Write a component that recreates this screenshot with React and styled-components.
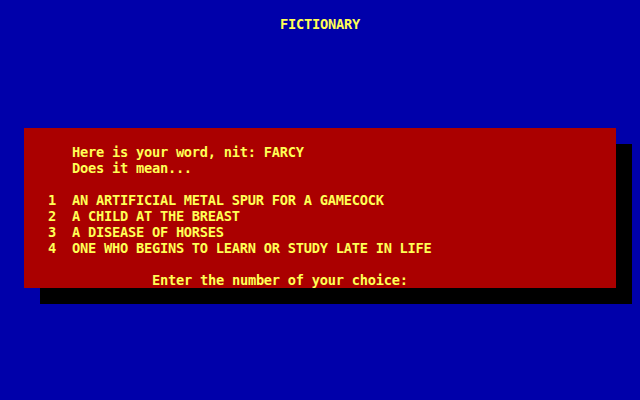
import React from "react";
import styled, { createGlobalStyle } from "styled-components";

const Global = createGlobalStyle`
  html, body { margin: 0; padding: 0; background: #0000aa; }
  body { width: 640px; height: 400px; overflow: hidden; }
`;

const Screen = styled.div`
  width: 640px;
  height: 400px;
  background: #0000aa;
  color: #ffff55;
  font-family: "DejaVu Sans Mono", "Liberation Mono", monospace;
  font-weight: bold;
  font-size: 13.7px;
  letter-spacing: -0.25px;
  line-height: 16px;
  display: flex;
  flex-direction: column;
  padding-top: 16px;
  box-sizing: border-box;
`;

const Title = styled.div`
  height: 16px;
  text-align: center;
  white-space: pre;
`;

const Dialog = styled.div`
  margin: 96px 0 0 24px;
  width: 592px;
  height: 160px;
  background: #aa0000;
  box-shadow: 16px 16px 0 0 #000000;
  box-sizing: border-box;
  padding-top: 16px;
  display: flex;
  flex-direction: column;
`;

const Line = styled.div`
  height: 16px;
  white-space: pre;
  padding-left: ${(p) => (p.$col || 0) * 8}px;
  display: flex;
`;

const Num = styled.span`
  width: 24px;
  flex: none;
`;

const choices = [
  "AN ARTIFICIAL METAL SPUR FOR A GAMECOCK",
  "A CHILD AT THE BREAST",
  "A DISEASE OF HORSES",
  "ONE WHO BEGINS TO LEARN OR STUDY LATE IN LIFE",
];

export default function App() {
  return (
    <>
      <Global />
      <Screen>
        <Title>FICTIONARY</Title>
        <Dialog>
          <Line $col={6}>Here is your word, nit: FARCY</Line>
          <Line $col={6}>Does it mean...</Line>
          <Line />
          {choices.map((c, i) => (
            <Line key={i} $col={3}>
              <Num>{i + 1}</Num>
              <span>{c}</span>
            </Line>
          ))}
          <Line />
          <Line $col={16}>Enter the number of your choice:</Line>
        </Dialog>
      </Screen>
    </>
  );
}
